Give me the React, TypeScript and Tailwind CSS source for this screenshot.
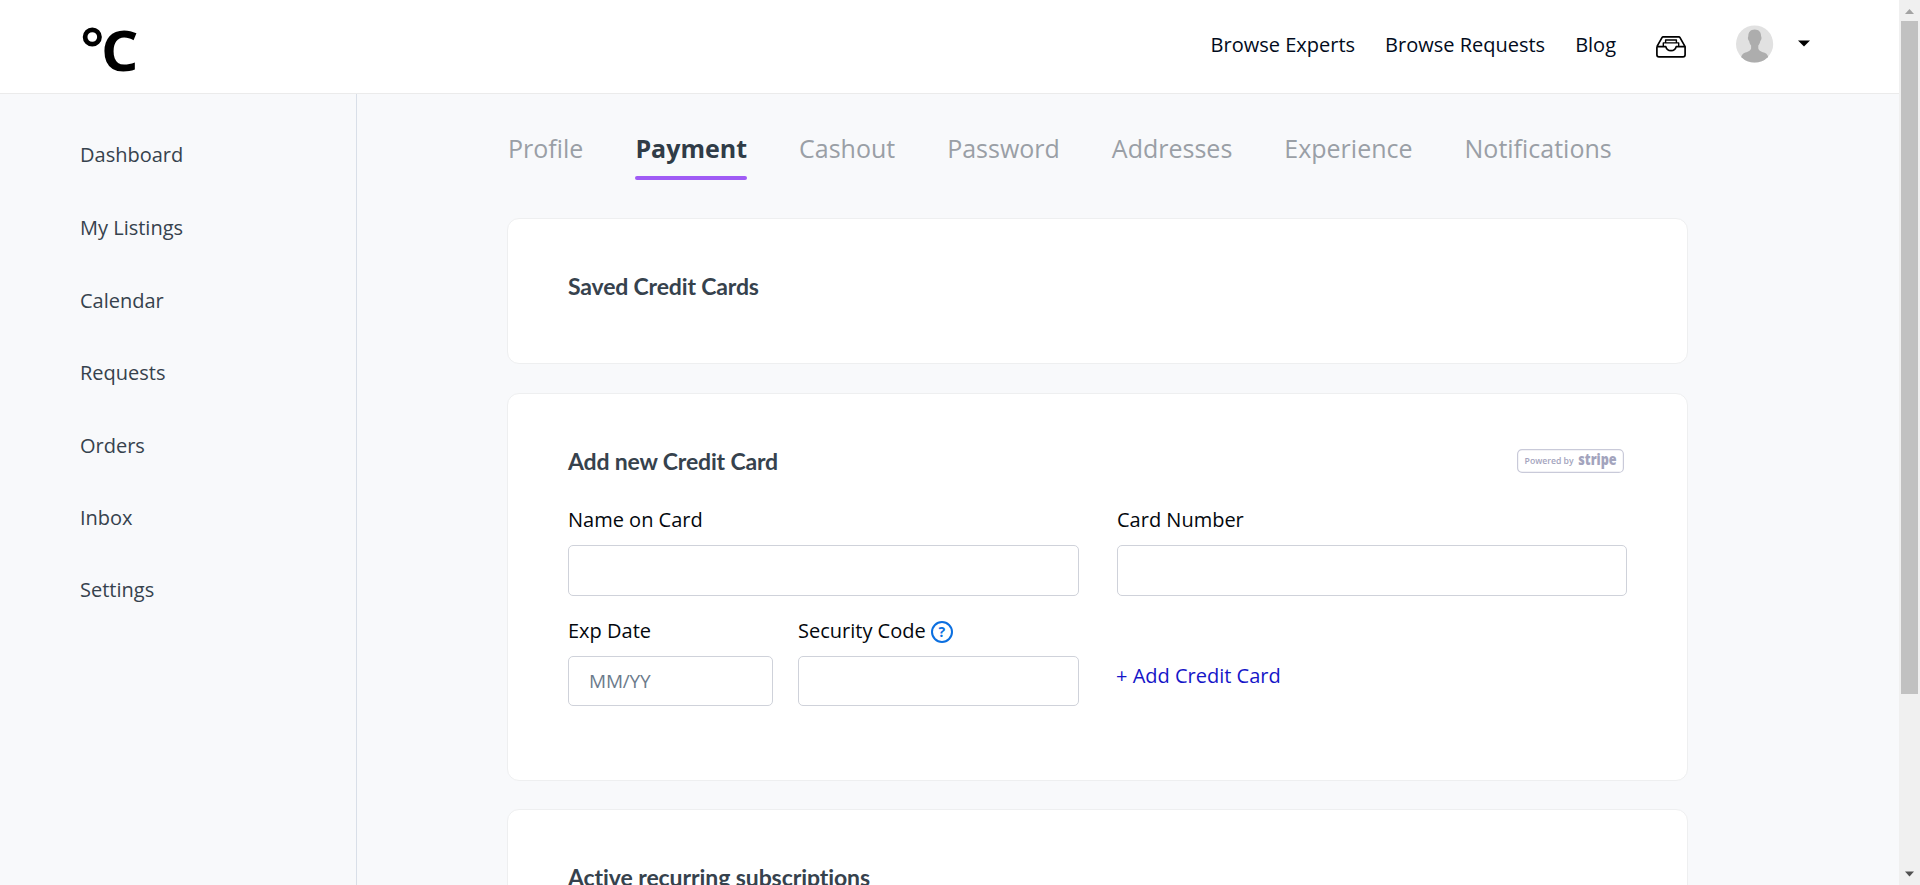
import React from "react";

const NAV = ["Browse Experts", "Browse Requests", "Blog"];
const SIDE = [
  { label: "Dashboard", row: "h-[73px]" },
  { label: "My Listings", row: "h-[73px]" },
  { label: "Calendar", row: "h-[72px]" },
  { label: "Requests", row: "h-[73px]" },
  { label: "Orders", row: "h-[72px]" },
  { label: "Inbox", row: "h-[72px]" },
  { label: "Settings", row: "h-[72px]" },
];
const TABS = ["Profile", "Payment", "Cashout", "Password", "Addresses", "Experience", "Notifications"];

function Logo() {
  return (
    <svg width="70" height="80" viewBox="76 10 70 80" className="block">
      <circle cx="92.3" cy="37" r="7.2" fill="none" stroke="#000" strokeWidth="4.7" />
      <text x="101" y="71.4" fontSize="56" fontWeight="700" textLength="37.5" lengthAdjust="spacingAndGlyphs" className="font-['Open_Sans',sans-serif]">
        C
      </text>
    </svg>
  );
}

function InboxIcon() {
  return (
    <svg width="30" height="22" viewBox="0 0 30 22" fill="none" stroke="#000" strokeWidth="1.7" strokeLinejoin="round" className="block">
      <path d="M.9 10.6 6 1.6Q6.4.9 7.2.9H22.8Q23.6.9 24 1.6L29.1 10.6V18.8Q29.1 20.9 27 20.9H3Q.9 20.9.9 18.8V11.6Q.9 10.6 2 10.6H9.8C10.4 13 12.4 14.7 15 14.7S19.6 13 20.2 10.6H29.1" />
      <path d="M7.3 10.4V6.9H22.7V10.4M9.6 6.8V4H20.4V6.8" strokeWidth="1.4" />
    </svg>
  );
}

function Avatar() {
  return (
    <svg width="38" height="38" viewBox="0 0 38 38" className="block">
      <defs>
        <clipPath id="round">
          <circle cx="18.6" cy="19" r="18.6" />
        </clipPath>
      </defs>
      <g clipPath="url(#round)">
        <rect width="38" height="38" fill="#e1e1e1" />
        <path
          fill="#adadad"
          d="M18.7 4.6C23 4.6 25.1 7.4 25.1 11.2C25.9 12.4 25.5 15 24.3 16C23.9 18.2 23.1 19.4 22.3 20.6V23.4C22.7 25.8 26.2 26.6 29.1 28C31.1 29 31.9 30.5 32.5 33V38H4.9V33C5.5 30.5 6.3 29 8.3 28C11.2 26.6 14.7 25.8 15.1 23.4V20.6C14.3 19.4 13.5 18.2 13.1 16C11.9 15 11.5 12.4 12.3 11.2C12.3 7.4 14.4 4.6 18.7 4.6Z"
        />
      </g>
    </svg>
  );
}

function HelpIcon() {
  return (
    <span className="mt-[2px] ml-px flex h-[22px] w-[22px] items-center justify-center rounded-full border-2 border-[#0b6fe0] text-[14px] leading-none font-bold text-[#0b6fe0]">
      ?
    </span>
  );
}

function StripeBadge() {
  return (
    <svg width="107" height="24" viewBox="0 0 107 24" className="mt-[-1px] mr-[3px] block" fill="#a3a4bd">
      <rect x=".6" y=".6" width="105.8" height="22.8" rx="4.5" fill="#fff" stroke="#c9cad9" strokeWidth="1.2" />
      <text x="7.6" y="14.8" fontSize="9.5" fontWeight="600" textLength="49" lengthAdjust="spacingAndGlyphs" className="font-['Open_Sans',sans-serif]">
        Powered by
      </text>
      <text x="61.3" y="16.2" fontSize="15.5" fontWeight="800" textLength="38.4" lengthAdjust="spacingAndGlyphs" className="font-['Open_Sans',sans-serif]">
        stripe
      </text>
    </svg>
  );
}

function Card({ className, children }: { className: string; children: React.ReactNode }) {
  return <section className={"ml-[-1px] w-[1181px] rounded-xl border border-[#eeeff0] bg-white px-[60px] " + className}>{children}</section>;
}

function Heading({ tracking = "tracking-[-0.16px]", children }: { tracking?: string; children: React.ReactNode }) {
  return <h2 className={"font-['Lato',sans-serif] text-[23px] leading-[30px] font-bold text-[#36424d] " + tracking}>{children}</h2>;
}

function Field({ label, className, input, placeholder, help }: { label: string; className: string; input: string; placeholder?: string; help?: boolean }) {
  return (
    <label className={"flex flex-col " + className}>
      <span className="flex h-[30px] items-center gap-1 text-[20px] leading-[30px] whitespace-nowrap">
        {label}
        {help && <HelpIcon />}
      </span>
      <input
        type="text"
        placeholder={placeholder}
        className={"mt-[10px] w-full rounded-[5px] border border-[#cfd2da] bg-white px-5 text-[19px] tracking-[-0.2px] placeholder:text-[#6c7b8c] " + input}
      />
    </label>
  );
}

function ScrollBar() {
  return (
    <div className="flex h-full w-[21px] flex-none flex-col items-center bg-[#f0f0f0]">
      <svg width="21" height="21" viewBox="0 0 21 21" className="block flex-none">
        <path d="M6 14 10.5 9 15 14Z" fill="#a3a3a3" />
      </svg>
      <div className="h-[673px] w-[17px] bg-[#c1c1c1]" />
      <svg width="21" height="21" viewBox="0 0 21 21" className="mt-auto block">
        <path d="M6 7.5H15L10.5 12.5Z" fill="#505050" />
      </svg>
    </div>
  );
}

export default function App() {
  return (
    <div className="flex h-[885px] w-[1920px] overflow-hidden bg-[#f8f9fb] font-['Open_Sans',sans-serif] text-[#03070d]">
      <div className="flex min-w-0 flex-1 flex-col">
        <header className="flex h-[94px] flex-none items-center border-b border-[#ebebeb] bg-white pl-[76px]">
          <div className="mt-[7px]">
            <Logo />
          </div>
          <nav className="mb-1 ml-auto flex gap-[30px] text-[20px] leading-[30px]">
            {NAV.map((n) => (
              <a key={n} className="text-[#020b1c]">{n}</a>
            ))}
          </nav>
          <div className="ml-[40px]">
            <InboxIcon />
          </div>
          <div className="mb-[6px] ml-[50px]">
            <Avatar />
          </div>
          <svg width="12" height="7" viewBox="0 0 12 7" className="mr-[89px] mb-[6px] ml-[24px] block">
            <path d="M0 .5H12L6 6.5Z" fill="#000" />
          </svg>
        </header>

        <div className="flex min-h-0 flex-1">
          <aside className="flex w-[357px] flex-none flex-col border-r border-[#d9dfe8] pt-[46px] pl-20">
            {SIDE.map((s) => (
              <a key={s.label} className={"text-[20px] leading-[30px] text-[#36424d] " + s.row}>{s.label}</a>
            ))}
          </aside>

          <main className="flex flex-1 flex-col overflow-hidden pt-[35px] pl-[151px]">
            <nav className="flex gap-[52px] text-[25px] leading-[38px]">
              {TABS.map((t) =>
                t === "Payment" ? (
                  <a key={t} className="flex flex-col font-bold text-[#303c47]">
                    {t}
                    <span className="mt-[9px] h-1 rounded-full bg-[#a05cf5]" />
                  </a>
                ) : (
                  <a key={t} className="text-[#9a9fa6]">{t}</a>
                )
              )}
            </nav>

            <Card className="mt-[38px] h-[146px] flex-none pt-[52px]">
              <Heading>Saved Credit Cards</Heading>
            </Card>

            <Card className="mt-[29px] h-[388px] flex-none pt-[52px]">
              <div className="flex items-center justify-between">
                <Heading>Add new Credit Card</Heading>
                <StripeBadge />
              </div>
              <div className="mt-[29px] flex justify-between">
                <Field label="Name on Card" className="w-[511px]" input="h-[51px]" />
                <Field label="Card Number" className="w-[510px]" input="h-[51px]" />
              </div>
              <div className="mt-[20px] flex">
                <Field label="Exp Date" className="w-[205px]" input="h-[50px]" placeholder="MM/YY" />
                <Field label="Security Code" className="ml-[25px] w-[281px]" input="h-[50px]" help />
                <a className="mt-[45px] ml-[37px] text-[20px] leading-[30px] text-[#1515c8]">+ Add Credit Card</a>
              </div>
            </Card>

            <Card className="mt-[28px] h-[200px] flex-none pt-[52px]">
              <Heading tracking="tracking-[-0.08px]">Active recurring subscriptions</Heading>
            </Card>
          </main>
        </div>
      </div>
      <ScrollBar />
    </div>
  );
}
